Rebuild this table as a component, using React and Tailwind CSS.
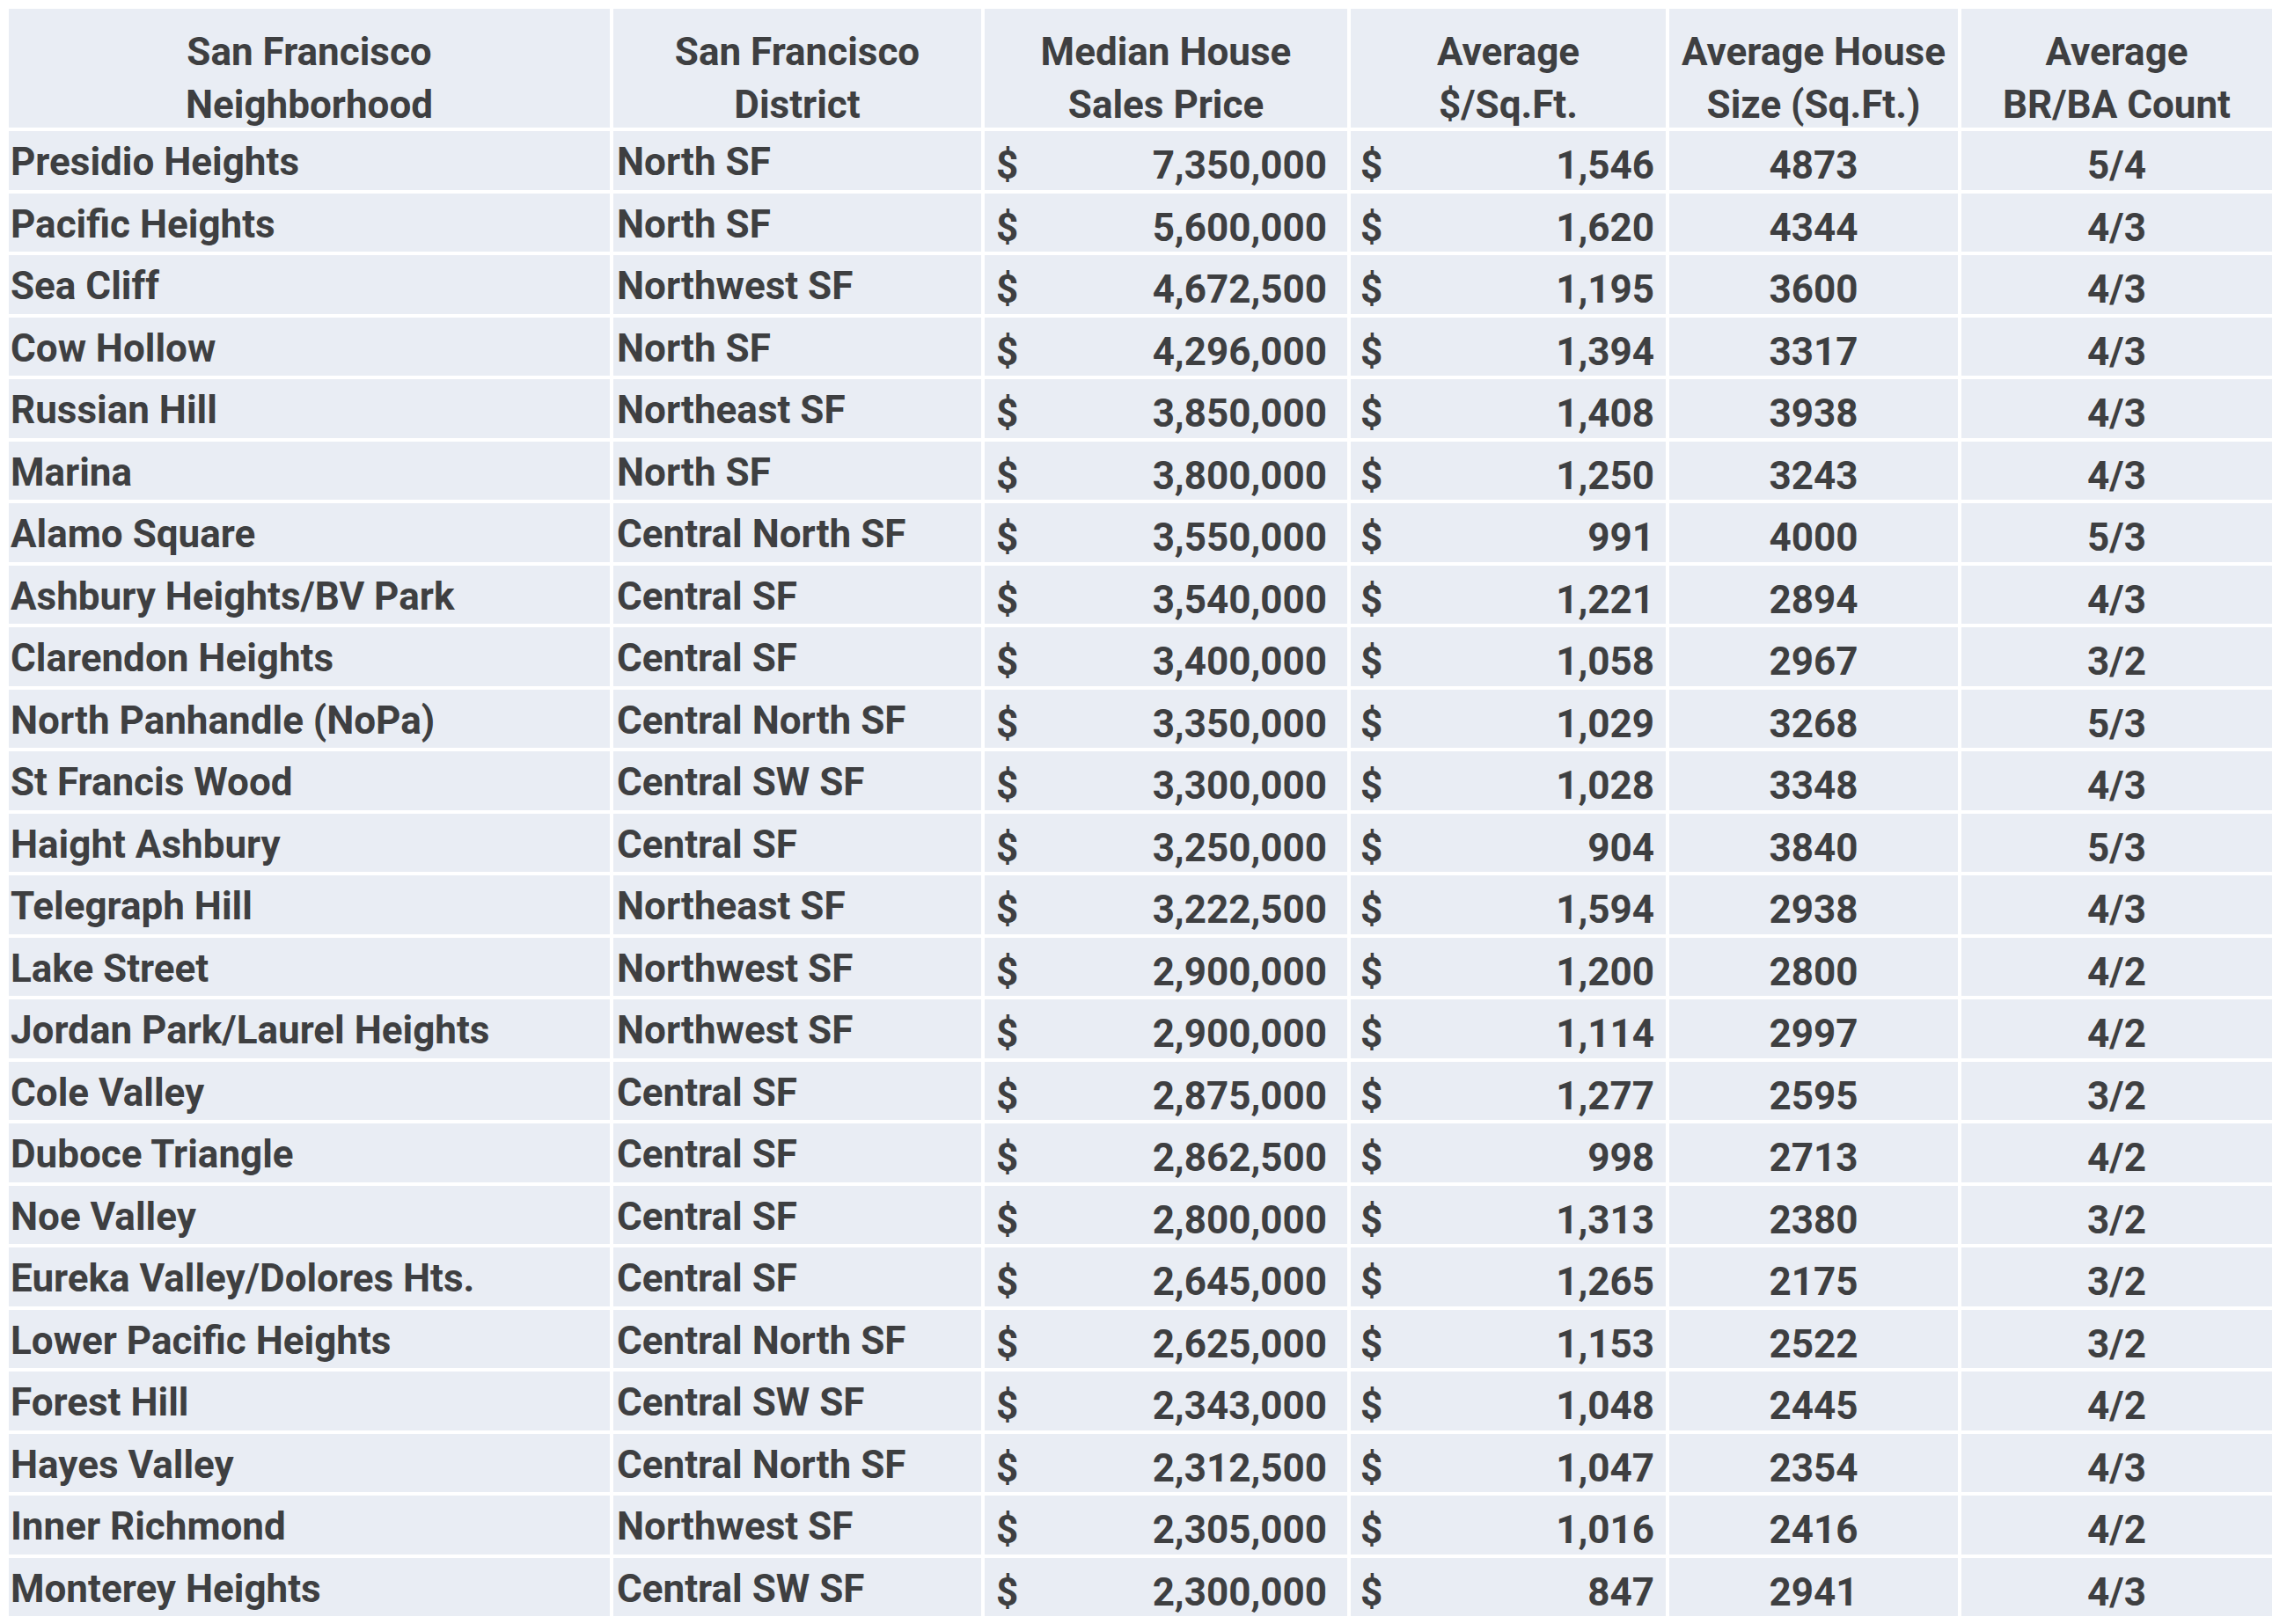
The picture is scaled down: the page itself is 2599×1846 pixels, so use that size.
import React from "react";

const rows = [
  ["Presidio Heights", "North SF", "7,350,000", "1,546", "4873", "5/4"],
  ["Pacific Heights", "North SF", "5,600,000", "1,620", "4344", "4/3"],
  ["Sea Cliff", "Northwest SF", "4,672,500", "1,195", "3600", "4/3"],
  ["Cow Hollow", "North SF", "4,296,000", "1,394", "3317", "4/3"],
  ["Russian Hill", "Northeast SF", "3,850,000", "1,408", "3938", "4/3"],
  ["Marina", "North SF", "3,800,000", "1,250", "3243", "4/3"],
  ["Alamo Square", "Central North SF", "3,550,000", "991", "4000", "5/3"],
  ["Ashbury Heights/BV Park", "Central SF", "3,540,000", "1,221", "2894", "4/3"],
  ["Clarendon Heights", "Central SF", "3,400,000", "1,058", "2967", "3/2"],
  ["North Panhandle (NoPa)", "Central North SF", "3,350,000", "1,029", "3268", "5/3"],
  ["St Francis Wood", "Central SW SF", "3,300,000", "1,028", "3348", "4/3"],
  ["Haight Ashbury", "Central SF", "3,250,000", "904", "3840", "5/3"],
  ["Telegraph Hill", "Northeast SF", "3,222,500", "1,594", "2938", "4/3"],
  ["Lake Street", "Northwest SF", "2,900,000", "1,200", "2800", "4/2"],
  ["Jordan Park/Laurel Heights", "Northwest SF", "2,900,000", "1,114", "2997", "4/2"],
  ["Cole Valley", "Central SF", "2,875,000", "1,277", "2595", "3/2"],
  ["Duboce Triangle", "Central SF", "2,862,500", "998", "2713", "4/2"],
  ["Noe Valley", "Central SF", "2,800,000", "1,313", "2380", "3/2"],
  ["Eureka Valley/Dolores Hts.", "Central SF", "2,645,000", "1,265", "2175", "3/2"],
  ["Lower Pacific Heights", "Central North SF", "2,625,000", "1,153", "2522", "3/2"],
  ["Forest Hill", "Central SW SF", "2,343,000", "1,048", "2445", "4/2"],
  ["Hayes Valley", "Central North SF", "2,312,500", "1,047", "2354", "4/3"],
  ["Inner Richmond", "Northwest SF", "2,305,000", "1,016", "2416", "4/2"],
  ["Monterey Heights", "Central SW SF", "2,300,000", "847", "2941", "4/3"],
];

const headers = [
  ["San Francisco", "Neighborhood"],
  ["San Francisco", "District"],
  ["Median House", "Sales Price"],
  ["Average", "$/Sq.Ft."],
  ["Average House", "Size (Sq.Ft.)"],
  ["Average", "BR/BA Count"],
];

export default function App() {
  return (
    <div className="min-h-screen bg-white pl-[10px] pt-[10px] font-['Roboto','Liberation_Sans',sans-serif] font-bold text-[44px] text-[#3e3f41]">
      <div className="grid w-max grid-cols-[683px_418px_412px_358px_328px_353px] grid-rows-[135px_repeat(24,66.5px)] gap-[4px]">
        {headers.map((h, i) => (
          <div
            key={"h" + i}
            className="flex flex-col items-center bg-[#e9edf4] pt-[19px] text-center leading-[60px] whitespace-nowrap"
          >
            <span>{h[0]}</span>
            <span>{h[1]}</span>
          </div>
        ))}
        {rows.map((r, ri) => (
          <React.Fragment key={ri}>
            <div className="bg-[#e9edf4] pl-[2px] pt-[4px] leading-[62px] whitespace-nowrap">{r[0]}</div>
            <div className="bg-[#e9edf4] pl-[4px] pt-[4px] leading-[62px] whitespace-nowrap">{r[1]}</div>
            <div className="flex justify-between bg-[#e9edf4] pl-[13px] pr-[23px] pt-[12px] leading-[54px] whitespace-nowrap">
              <span>$</span>
              <span>{r[2]}</span>
            </div>
            <div className="flex justify-between bg-[#e9edf4] pl-[11px] pr-[13px] pt-[12px] leading-[54px] whitespace-nowrap">
              <span>$</span>
              <span>{r[3]}</span>
            </div>
            <div className="bg-[#e9edf4] pt-[12px] text-center leading-[54px]">{r[4]}</div>
            <div className="bg-[#e9edf4] pt-[12px] text-center leading-[54px]">{r[5]}</div>
          </React.Fragment>
        ))}
      </div>
    </div>
  );
}
